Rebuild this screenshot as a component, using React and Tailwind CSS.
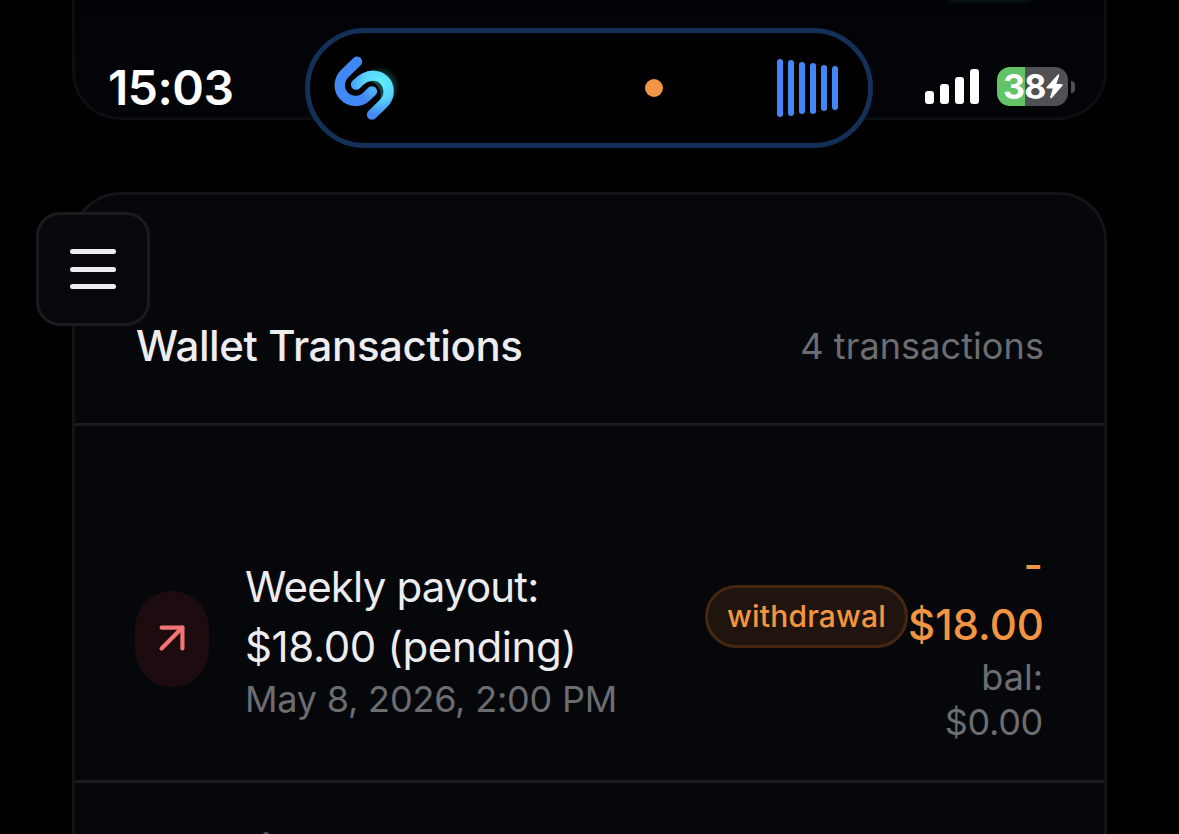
import React from "react";
import { ArrowUpRight } from "lucide-react";

const bars = [
  { h: "h-[58px]" },
  { h: "h-[56px]" },
  { h: "h-[52px]" },
  { h: "h-[51px]" },
  { h: "h-[46px]" },
  { h: "h-[44px]" },
];

const transactions = [
  {
    id: 1,
    title: "Weekly payout:",
    detail: "$18.00 (pending)",
    date: "May 8, 2026, 2:00 PM",
    type: "withdrawal",
    amount: "$18.00",
    balance: "$0.00",
  },
];

function ShazamLogo() {
  return (
    <svg className="h-[76px] w-[70px]" viewBox="0 0 210 228" fill="none">
      <defs>
        <radialGradient id="glow" gradientUnits="userSpaceOnUse" cx="150" cy="98" r="98">
          <stop offset="0" stopColor="#5ff0fb" />
          <stop offset="0.5" stopColor="#58d4fa" />
          <stop offset="1" stopColor="#4288f5" />
        </radialGradient>
        <radialGradient id="tip" gradientUnits="userSpaceOnUse" cx="128" cy="120" r="34">
          <stop offset="0" stopColor="#55b4f7" />
          <stop offset="1" stopColor="#4288f5" />
        </radialGradient>
        <radialGradient id="halo">
          <stop offset="0.5" stopColor="#2fb5b5" stopOpacity="0.4" />
          <stop offset="1" stopColor="#2fb5b5" stopOpacity="0" />
        </radialGradient>
      </defs>
      <circle cx="150" cy="108" r="60" fill="url(#halo)" />
      <circle cx="112" cy="134" r="40" fill="#000" />
      <path
        d="M81 35 L46 69 C25 89 24 118 41 137 C60 158 91 157 108 141 L126 124"
        stroke="url(#tip)"
        strokeWidth="31"
        strokeLinecap="round"
      />
      <path
        d="M78 104 C96 85 112 77 128 77 C156 77 176 98 176 124 C176 144 168 153 160 161 L126 194"
        stroke="url(#glow)"
        strokeWidth="31"
        strokeLinecap="round"
      />
    </svg>
  );
}

function StatusBar() {
  return (
    <div className="absolute inset-x-0 top-0 h-[176px] text-white">
      <div className="flex h-full items-center">
        <div className="ml-[108px] w-[197px] text-[48px] leading-none font-semibold tracking-[-0.5px]">15:03</div>

        {/* Dynamic island */}
        <div className="flex h-[120px] w-[568px] items-center rounded-[60px] border-[5px] border-[#142f58] bg-black">
          <div className="ml-5">
            <ShazamLogo />
          </div>
          <div className="ml-[245px] size-[18px] rounded-full bg-[#f29547]" />
          <div className="ml-[114px] flex items-center gap-[5px]">
            {bars.map((bar, i) => (
              <div key={i} className={`${bar.h} w-[6px] rounded-full bg-[#4288f5]`} />
            ))}
          </div>
        </div>

        {/* Signal */}
        <div className="mb-[3px] ml-[52px] flex items-end gap-[6px]">
          <div className="h-[13px] w-[9px] rounded-[3px] bg-white" />
          <div className="h-[20px] w-[9px] rounded-[3px] bg-white" />
          <div className="h-[27px] w-[9px] rounded-[3px] bg-white" />
          <div className="h-[35px] w-[9px] rounded-[3px] bg-white" />
        </div>

        {/* Battery */}
        <div className="mb-[3px] ml-[18px] flex h-[39px] w-[71px] items-center rounded-[13px] bg-linear-to-r from-[#62c466] from-[39.5%] to-[#515155] to-[39.5%] pl-[6px]">
          <span className="w-[43px] text-[34px] leading-none font-bold tracking-[-0.7px]">38</span>
          <svg className="h-[25px] w-[17px] shrink-0" viewBox="0 0 17 25" fill="white">
            <path d="M12 0.4 L0.6 13 Q0 14.4 1.3 14.6 L6.8 14.6 L4.1 23 Q4.2 24.8 5.8 24 L16.6 11.6 Q17 10.2 15.8 10 L10.4 10 L13.2 1.6 Q13.2 0 12 0.4Z" />
          </svg>
        </div>
        <div className="mb-[3px] ml-[3px] h-[12px] w-[4px] rounded-r-full bg-[#515155]" />
      </div>
    </div>
  );
}

export default function App() {
  return (
    <div className="relative h-[834px] w-full overflow-hidden bg-[#010102] font-['Inter',sans-serif]">
      <div className="flex flex-col gap-[72px] px-[72px]">
        {/* Previous card */}
        <div className="h-[120px] rounded-b-[48px] border-[3px] border-t-0 border-[#0d0e11] bg-linear-to-b from-[#020306] to-[#040509]">
          <div className="ml-[874px] h-[3px] w-[82px] rounded-b-full bg-[#04100d]" />
        </div>

        {/* Wallet transactions */}
        <div className="h-[700px] rounded-t-[48px] border-[3px] border-b-0 border-[#131417] bg-[#06070b]">
          <div className="flex items-center justify-between border-b-[3px] border-[#1a1b1f] px-[60px] pt-[121px] pb-[47px]">
            <h2 className="pl-px text-[42px] leading-[60px] font-medium tracking-[-0.4px] text-[#ededef]">
              Wallet Transactions
            </h2>
            <span className="text-[36px] leading-[48px] tracking-[0.1px] text-[#6c6d71]">4 transactions</span>
          </div>

          {transactions.map((tx) => (
            <div
              key={tx.id}
              className="flex items-center border-b-[3px] border-[#1a1b1f] px-[60px] pt-[108px] pb-[35px]"
            >
              <div className="mb-px flex h-24 w-[74px] shrink-0 items-center justify-center rounded-full bg-[#1c0c10]">
                <ArrowUpRight className="mb-[2px] size-[50px] text-[#f27475]" />
              </div>

              <div className="ml-9 flex-1 whitespace-nowrap">
                <p className="text-[42px] leading-[60px] tracking-[-0.8px] text-[#ededef]">{tx.title}</p>
                <p className="text-[42px] leading-[60px] tracking-[-0.35px] text-[#ededef]">{tx.detail}</p>
                <p className="text-[36px] leading-[45px] tracking-[-0.2px] text-[#6c6d71]">{tx.date}</p>
              </div>

              <div className="mt-[51px] flex h-[63px] w-[203px] items-center justify-center self-start rounded-full border-[3px] border-[#472711] bg-[#20140e] text-[30px] font-medium tracking-[0.2px] text-[#f29441]">
                {tx.type}
              </div>

              <div className="w-[136px] pt-px pr-px text-right">
                <p className="text-[42px] leading-[60px] font-medium text-[#f29441]">-</p>
                <p className="text-[42px] leading-[60px] font-medium text-[#f29441]">{tx.amount}</p>
                <p className="text-[36px] leading-[45px] text-[#6c6d71]">bal:</p>
                <p className="text-[36px] leading-[45px] tracking-[-0.3px] text-[#6c6d71]">{tx.balance}</p>
              </div>
            </div>
          ))}

          {/* Top edge of the next row */}
          <div className="mt-[49px] ml-[188px] h-[6px] w-[6px] rounded-full bg-[#55565a]" />
        </div>
      </div>

      {/* Menu button */}
      <button className="absolute top-[212px] left-9 flex size-[114px] flex-col items-center justify-center gap-[12.5px] rounded-[24px] border-[3px] border-[#1a1b1f] bg-[#07080c]">
        <span className="h-[5px] w-[46px] rounded-full bg-[#ededef]" />
        <span className="h-[5px] w-[46px] rounded-full bg-[#ededef]" />
        <span className="h-[5px] w-[46px] rounded-full bg-[#ededef]" />
      </button>

      <StatusBar />
    </div>
  );
}
